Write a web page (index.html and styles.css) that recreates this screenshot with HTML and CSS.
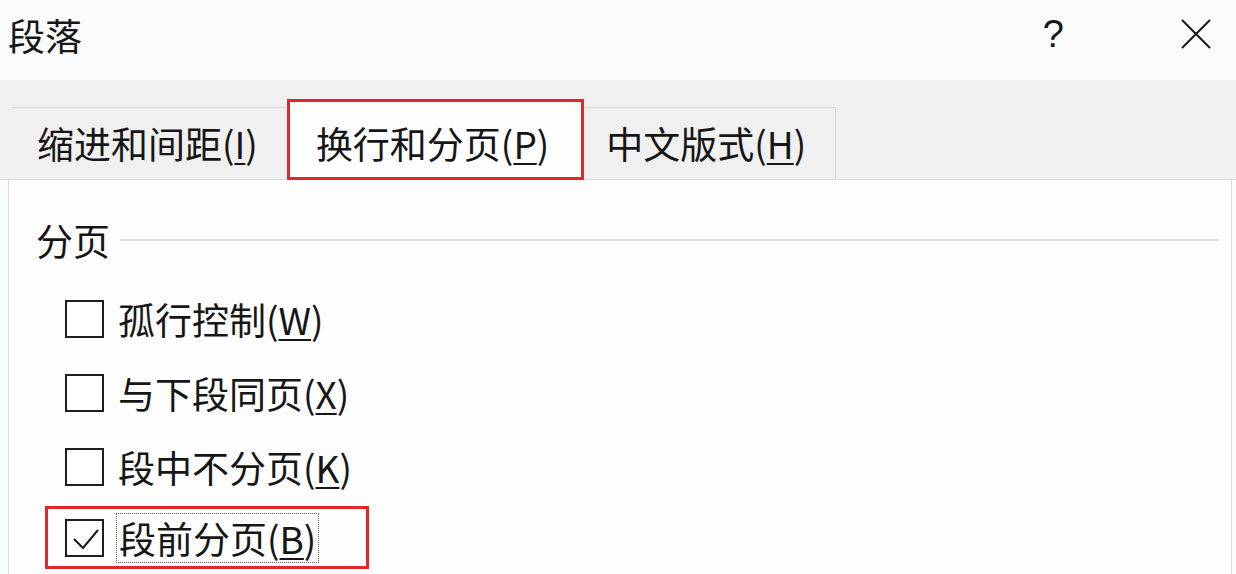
FILE: index.html
```html
<!DOCTYPE html>
<html lang="zh-CN">
<head>
    <meta charset="UTF-8">
    <title>段落</title>
    <link rel="stylesheet" href="styles.css">
</head>
<body>
    <div class="dialog">
        <div class="titlebar">
            <span class="title">段落</span>
            <div class="title-actions">
                <span class="help-btn">?</span>
                <span class="close-btn">
                    <svg width="32" height="32" viewBox="0 0 32 32">
                        <path d="M2 2 L30 30 M30 2 L2 30" stroke="#1a1a1a" stroke-width="2" fill="none"/>
                    </svg>
                </span>
            </div>
        </div>

        <div class="tab-strip">
            <div class="tab">缩进和间距(<u>I</u>)</div>
            <div class="tab active">换行和分页(<u>P</u>)</div>
            <div class="tab">中文版式(<u>H</u>)</div>
        </div>

        <div class="panel">
            <div class="group-title">
                <span>分页</span>
                <span class="group-line"></span>
            </div>

            <div class="options">
                <label class="option">
                    <span class="checkbox"></span>
                    <span class="option-label">孤行控制(<u>W</u>)</span>
                </label>
                <label class="option">
                    <span class="checkbox"></span>
                    <span class="option-label">与下段同页(<u>X</u>)</span>
                </label>
                <label class="option">
                    <span class="checkbox"></span>
                    <span class="option-label">段中不分页(<u>K</u>)</span>
                </label>
                <label class="option marked">
                    <span class="checkbox">
                        <svg width="34" height="34" viewBox="0 0 34 34">
                            <polyline points="6,18 15,27 30,9" stroke="#1a1a1a" stroke-width="2" fill="none"/>
                        </svg>
                    </span>
                    <span class="option-label focused">段前分页(<u>B</u>)</span>
                </label>
            </div>
        </div>
    </div>
</body>
</html>
```

FILE: styles.css
```css
:root {
    --text-color: #161616;
    --titlebar-bg: #fafbfd;
    --strip-bg: #f0f0f0;
    --panel-bg: #fdfdfd;
    --border-color: #d9d9d9;
    --mark-color: #e0282c;
}

* {
    margin: 0;
    padding: 0;
    box-sizing: border-box;
}

body {
    font-family: "Noto Sans CJK SC", "Noto Sans", sans-serif;
    background-color: var(--titlebar-bg);
    color: var(--text-color);
    width: 1236px;
    height: 574px;
    overflow: hidden;
}

u {
    text-decoration-thickness: 2px;
    text-underline-offset: 4px;
}

.titlebar {
    height: 80px;
    display: flex;
    align-items: center;
    justify-content: space-between;
    padding: 0 24px 0 8px;
}

.title {
    font-size: 37px;
    line-height: 40px;
    margin-top: -10px;
}

.title-actions {
    display: flex;
    align-items: center;
    gap: 116px;
    margin-top: -12px;
}

.help-btn {
    font-family: "Liberation Sans", sans-serif;
    font-size: 38px;
    line-height: 40px;
}

.close-btn {
    display: flex;
}

.tab-strip {
    height: 100px;
    background-color: var(--strip-bg);
    display: flex;
    align-items: flex-end;
    padding-left: 12px;
    border-bottom: 1px solid var(--border-color);
}

.tab {
    height: 72px;
    font-size: 37px;
    line-height: 70px;
    padding: 0 29px 0 25px;
    border-top: 1px solid var(--border-color);
    white-space: nowrap;
}

.tab:last-child {
    border-right: 1px solid var(--border-color);
    padding: 0 29px 0 22px;
}

.tab.active {
    height: 81px;
    margin-bottom: -1px;
    line-height: 82px;
    background-color: var(--panel-bg);
    border: 3px solid var(--mark-color);
    padding: 0 32px 0 26px;
}

.panel {
    background-color: var(--panel-bg);
    margin: 0 4px 0 8px;
    border-left: 1px solid var(--border-color);
    border-right: 1px solid var(--border-color);
    height: 394px;
    padding: 40px 12px 0 27px;
}

.group-title {
    display: flex;
    align-items: center;
    gap: 10px;
    font-size: 37px;
    line-height: 40px;
}

.group-line {
    flex: 1;
    height: 2px;
    background-color: #dcdcdc;
}

.options {
    display: flex;
    flex-direction: column;
    align-items: flex-start;
    gap: 34px;
    padding: 39px 0 0 29px;
}

.option {
    display: flex;
    align-items: center;
    gap: 14px;
    height: 40px;
    font-size: 37px;
}

.checkbox {
    width: 39px;
    height: 38px;
    border: 2px solid #1e1e1e;
    background-color: #ffffff;
    display: flex;
    align-items: center;
    justify-content: center;
}

.option.marked {
    height: 63px;
    margin: -15px 0 0 -20px;
    padding: 1px 47px 0 17px;
    border: 3px solid var(--mark-color);
    gap: 12px;
}

.option-label.focused {
    border: 1px dotted #6a6a6a;
    height: 50px;
    line-height: 48px;
    padding: 0 2px;
}
```
